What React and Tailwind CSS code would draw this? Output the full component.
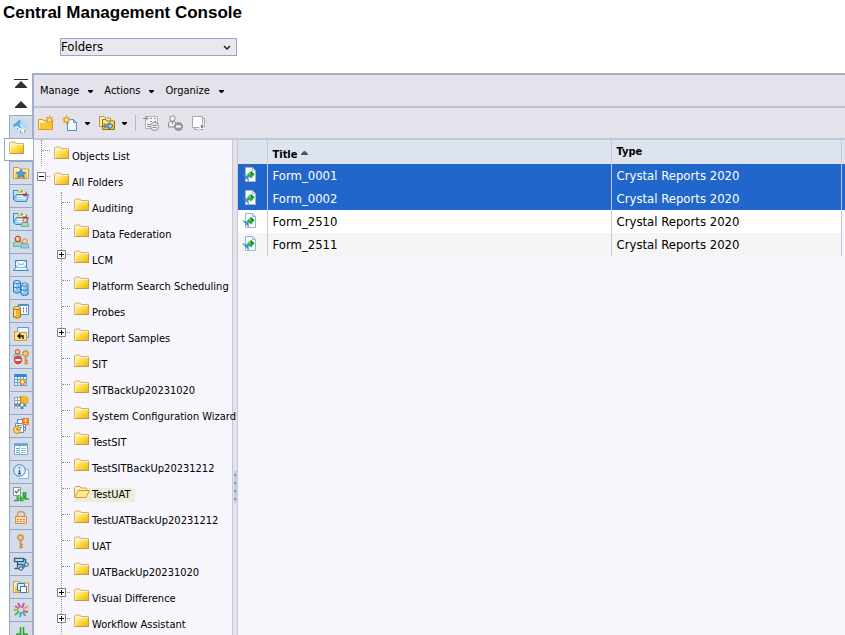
import React from "react";

const Folder = ({ open }) => (
  <svg width="16" height="14" viewBox="0 0 16 14" className="shrink-0" aria-hidden="true">
    <defs>
      <linearGradient id="fold" x1="0" y1="0" x2="1" y2="1">
        <stop offset="0" stopColor="#fff3b8" />
        <stop offset="0.5" stopColor="#fdd93c" />
        <stop offset="1" stopColor="#f0b40c" />
      </linearGradient>
    </defs>
    {open ? (
      <>
        <path d="M.5 12.500V3.500L1.500 2.500H6L7 4h5.500v2.500" fill="#fff3c4" stroke="#c9a25a" />
        <path d="M.8 13.500L4 6.500h11.500L12 13.500z" fill="#fdeb93" stroke="#d09a2a" />
      </>
    ) : (
      <>
        <path d="M.5 12.500V2L1.500 1H6L7 2.500h7.500v10z" fill="#fff0bd" stroke="#d5b070" />
        <path d="M2 4h12v8H2z" fill="url(#fold)" />
        <path d="M1 12.500h14M14.500 4v8" stroke="#c09a58" />
      </>
    )}
  </svg>
);

const Art = ({ children }) => (
  <svg width="16" height="16" viewBox="0 0 16 16" className="shrink-0" aria-hidden="true">
    {children}
  </svg>
);

const gold = "#d79a1e";
const blue = "#3b86c6";

const homeArt = (
  <>
    <path d="M1 6l6-5 5 2 3 6-3 4-4 2-6-4z" fill="#e8f4fd" stroke="#a9cdea" />
    <path d="M0 6l6-5 2 1-1 5 3 3-3-1-3-2-3 1z" fill="#5aa8e4" />
    <path d="M8 2l4 2 3 5-4 1-4-4z" fill="#b5daf6" />
    <path d="M11 11l2-1v3l-2 1z" fill="#e8a55c" />
    <path d="M7 11l1 3M4 9l1 2" stroke="#4b93cf" />
  </>
);
const foldArt = (
  <>
    <path d="M.5 13.500V2.500H6L7 4h8.500v9.500z" fill="#fff0bd" stroke="#d29a35" />
    <path d="M2 6h12v7H2z" fill="#f8c730" />
    <path d="M2 6h12v2H2z" fill="#fde58a" />
  </>
);
const starArt = (
  <>
    {foldArt}
    <path d="M8 4l1.500 3 3.500.4-2.500 2.300.7 3.300L8 11.400 4.800 13l.7-3.300L3 7.400 6.500 7z" fill="#4f9ae0" stroke="#2d75bd" strokeWidth=".6" />
  </>
);
const catsArt = (
  <>
    <path d="M.5 12V2.500H5L6 4h7.500v3" fill="#c5e3f8" stroke={blue} />
    <path d="M4 4l4-2 4 1 1 3H5z" fill="#fff" stroke="#d8cf8a" />
    <path d="M5 3h3v2H5z" fill="#f2cd28" />
    <path d="M8 2.500h2v2H8z" fill="#4fb053" />
    <path d="M3.500 6.500H15.500L13.500 13.500H2.500L.5 11z" fill="#9fd3f5" stroke={blue} />
    <path d="M4 8.500h7M4 10.500h9" stroke="#fff" />
    <path d="M10 5.500h4v2.500h-4z" fill="#e02828" />
  </>
);
const person = (x, y, shirt, hair) => (
  <g transform={`translate(${x} ${y})`}>
    <path d="M0 9V6.500Q0 5 2 5h3q2 0 2 1.500V9z" fill={shirt} stroke="#58a08a" strokeWidth=".7" />
    <circle cx="3.500" cy="2.800" r="2.200" fill="#f8cfa8" stroke={hair} strokeWidth=".9" />
  </g>
);
const pcatsArt = (
  <>
    {catsArt}
    {person(8.500, 6.500, "#9fdcb7", "#c6552c")}
  </>
);
const usersArt = (
  <>
    <g transform="translate(0 1) scale(1.200)">{person(0.500, 0.500, "#9fdcb7", "#c23b22")}</g>
    <g transform="translate(8 3) scale(1.100)">{person(0, 1, "#9cc9f5", "#d9823e")}</g>
  </>
);
const mailArt = (
  <>
    <path d="M2.500 3.500h11v7h-11z" fill="#fff" stroke={blue} />
    <path d="M3 4l5 4 5-4M3 10l3.500-3M13 10L9.500 7" fill="none" stroke="#7fb1da" />
    <path d="M2.500 10.500L.5 13.500h15l-2-3" fill="#e6f2fc" stroke={blue} />
  </>
);
const can = (x, y, h, fill, stroke) => (
  <g transform={`translate(${x} ${y})`}>
    <path d={`M.5 2v${h}q3.500 2.500 7 0V2z`} fill={fill} stroke={stroke} />
    <ellipse cx="4" cy="2" rx="3.500" ry="1.500" fill="#fff" fillOpacity=".7" stroke={stroke} />
    <path d="M2 4v6" stroke="#fff" />
  </g>
);
const serversArt = (
  <>
    {can(0, 0, 10, "#8cc8f5", "#2c78b8")}
    {can(7.500, 2.500, 10, "#8cc8f5", "#2c78b8")}
    <path d="M.5 7q3.500 2 7 0M8 9.500q3.500 2 7 0" fill="none" stroke="#2c78b8" />
  </>
);
const dataArt = (
  <>
    <path d="M5.500 1.500h10v10h-10z" fill="#fff" stroke="#4b8fd0" />
    <path d="M5 2.500h11" stroke="#4b8fd0" />
    <path d="M10 5.500h1m2 0h1M10 8.500h1m2 0h1" stroke="#3a72b8" strokeWidth="2" />
    {can(0, 3, 9, "#eeb422", "#ad7a10")}
  </>
);
const undoArt = (
  <>
    <path d="M4.500 1.500h11v10h-11z" fill="#eaf4fd" stroke="#5a9bd5" />
    <path d="M1.500 14.500v-9H5l1 1h7.500v8z" fill="#fbe08a" stroke={gold} />
    <path d="M5 10h5v3M7.500 7.500L5 10l2.500 2.500" fill="none" stroke="#111" strokeWidth="1.400" />
  </>
);
const keyShape = (
  <>
    <circle cx="3.500" cy="3.500" r="2.700" fill="#fbd58a" stroke="#cf8a35" strokeWidth="1.300" />
    <circle cx="3.500" cy="3" r=".8" fill="#fff" stroke="#cf8a35" strokeWidth=".5" />
    <path d="M3.500 6.500v8M4 10.500h2M4 13h2" stroke="#cf8a35" strokeWidth="1.700" />
  </>
);
const accessArt = (
  <>
    {person(1, 0, "#9fdcb7", "#c23b22")}
    <g transform="translate(9 1)">{keyShape}</g>
    <circle cx="5" cy="11" r="4.200" fill="#dc4040" />
    <path d="M2.500 11h5" stroke="#fff" strokeWidth="2" />
  </>
);
const calArt = (
  <>
    <path d="M1 2h13v12H1z" fill="#eaf5ff" />
    <path d="M1 3.500h13" stroke="#2f86d6" strokeWidth="3" />
    <path d="M1.500 2v12M4.500 5v9M7.500 5v9M10.500 5v9M13.500 2v12M1 7.500h13M1 10.500h13M1 13.500h13" stroke="#5ba4e0" />
    <circle cx="9.500" cy="10" r="2.300" fill="#fff" stroke="#f09020" strokeWidth="1.800" />
  </>
);
const gridArt = (
  <>
    <path d="M1 2h12v11H1z" fill="#f5f5f5" />
    <path d="M1.500 2v12M4.500 2v12M7.500 2v12M10.500 2v12M1 2.500h12M1 5.500h13M1 8.500h13M1 11.500h13" stroke="#9aa5b2" />
    <path d="M2 10h2M5 10h2M8 13h2M11 10h2" stroke="#3f90dc" strokeWidth="2" />
    <path d="M7.500 1v9" stroke="#b37a10" />
    <path d="M8 2l3-1 4 2v5l-4-1-3 1z" fill="#f6ba22" stroke="#d99a18" strokeWidth=".6" />
  </>
);
const alertArt = (
  <>
    <path d="M4.500 1.500h8v11h-8z" fill="#e8f3fd" stroke="#4b8fd0" />
    <path d="M2.500 5.500h8v9h-8z" fill="#fff" stroke="#4b8fd0" />
    <path d="M4 7.500h5M4 9.500h5M13 9.500h-2" stroke="#4b8fd0" />
    <circle cx="4" cy="12" r="3.300" fill="#fde28c" stroke={gold} strokeWidth="1.300" />
    <path d="M4 10v2h2" fill="none" stroke="#956510" />
    <path d="M9 0h7v7H9z" fill="#f5821f" />
    <path d="M12.500 1v3M12.500 5v1" stroke="#fff" strokeWidth="1.500" />
  </>
);
const listArt = (
  <>
    <path d="M1.500 2.500h13v11h-13z" fill="#fff" stroke="#78a8c9" />
    <path d="M2 4h12" stroke="#64a6d4" strokeWidth="2" />
    <path d="M3 7.500h3M3 9.500h3M3 11.500h3" stroke="#58a6d0" />
    <path d="M8 7.500h5M8 9.500h5M8 11.500h5" stroke="#9cc8c8" />
    <path d="M6.500 5v8" stroke="#a8c8de" />
  </>
);
const infoArt = (
  <>
    <path d="M7 5.500h8.500v9H6" fill="#f4f9fe" stroke="#86b4dc" />
    <circle cx="6.500" cy="6.500" r="5.800" fill="#dceefb" stroke="#3f86c8" />
    <path d="M6.500 3v1.500M6.500 6v4M5 9.700h3" stroke="#2668ad" strokeWidth="1.500" />
  </>
);
const gemFlow = (
  <path d="M7.500 2v9M10.500 2v9M7.500 9H4v4M10.500 9H14v4M1 13.500h6.500v-3M10.500 10.500v3H16" fill="none" stroke="#2da32d" strokeWidth="1.600" />
);
const auditArt = (
  <>
    <path d="M.5.5h7v8h-7z" fill="#fff" stroke="#8a949c" />
    <path d="M2 4l1.500 2L6.500 2" fill="none" stroke="#2fa13a" strokeWidth="1.300" />
    <path d="M4.500 9v3M7.500 9v3M10.500 5v5M12.500 5v5M1 13.500h4v-3M7.500 10.500v3h3M7 11.500h4v-3M12.500 9v3H16" fill="none" stroke="#2da32d" strokeWidth="1.700" />
  </>
);
const lockArt = (
  <>
    <path d="M4.500 7V4.500q0-3 3.500-3t3.500 3V7" fill="none" stroke="#cf9a6a" strokeWidth="1.500" />
    <path d="M2.500 6.500h11v7h-11z" fill="#fbdcae" stroke="#d38c4b" />
    <path d="M4 9.500h8M4 11.500h8" stroke="#d9873c" strokeDasharray="2 1" />
  </>
);
const keyArt = <g transform="translate(4 1)">{keyShape}</g>;
const toolsArt = (
  <>
    <path d="M1.500 2.500h9v3h-9zM4.500 8.500h6M4.500 5.500v6M1.500 12.500h5M10.500 3.500h2v4" fill="#fff" stroke="#27608f" strokeWidth="1.300" />
    <path d="M8 13l5-5" stroke="#3f86bd" strokeWidth="3" />
    <circle cx="8" cy="12.500" r="1.800" fill="#cfe5f6" stroke="#27608f" />
    <circle cx="13.500" cy="8.500" r="1.800" fill="#cfe5f6" stroke="#27608f" />
  </>
);
const promoArt = (
  <>
    {foldArt}
    <path d="M4.500 4.500h7v7h-7z" fill="#dceeff" stroke="#2f78d0" />
    <path d="M7.500 7.500h6v6h-6z" fill="#fff" stroke="#2f78d0" />
  </>
);
const burstArt = (
  <g strokeWidth="2">
    <path d="M7.500 5.500L5 1" stroke="#e0559a" />
    <path d="M9 6l2-5" stroke="#9a62c8" />
    <path d="M10 7l5-3" stroke="#f0a030" />
    <path d="M10 9l5 1" stroke="#e25b4b" />
    <path d="M9.500 10l3 4" stroke="#4f9ae0" />
    <path d="M8 10l-1 5" stroke="#35a6d8" />
    <path d="M6 9.500l-4 3.500" stroke="#53b257" />
    <path d="M5.500 8H1" stroke="#8bc34a" />
    <path d="M6 6.500L2 4" stroke="#d75a9c" />
  </g>
);

const sideItems = [
  ["Home", homeArt],
  ["Folders", null],
  ["Personal Folders", starArt],
  ["Categories", catsArt],
  ["Personal Categories", pcatsArt],
  ["Users and Groups", usersArt],
  ["Inboxes", mailArt],
  ["Servers", serversArt],
  ["Connections", dataArt],
  ["Replication Lists", undoArt],
  ["Access Levels", accessArt],
  ["Calendars", calArt],
  ["Events", gridArt],
  ["Instance Manager", alertArt],
  ["Query Results", listArt],
  ["Settings", infoArt],
  ["Auditing", auditArt],
  ["Authentication", lockArt],
  ["License Keys", keyArt],
  ["Applications", toolsArt],
  ["Promotion Management", promoArt],
  ["Visual Difference", burstArt],
  ["Monitoring", gemFlow],
];

const Sidebar = () => (
  <nav className="flex w-8 shrink-0 flex-col items-end">
    <div className="flex h-[42px] w-[22px] shrink-0 flex-col items-center gap-3 pt-[6px]">
      <button aria-label="Scroll to top">
        <svg width="14" height="10" viewBox="0 0 14 10" className="block"><path d="M0 0h14v1H0zM7 2l6 6v1H1V8z" fill="#303030" /></svg>
      </button>
      <button aria-label="Scroll up">
        <svg width="14" height="8" viewBox="0 0 14 8" className="block"><path d="M7 0l6 6v1H1V6z" fill="#303030" /></svg>
      </button>
    </div>
    {sideItems.map(([label, art]) =>
      label === "Folders" ? (
        <button key={label} aria-label={label} className="z-10 -mr-px flex h-[23px] w-[29px] shrink-0 items-center border border-r-0 border-[#93a7c8] bg-white pb-1 pl-1">
          <Folder />
        </button>
      ) : (
        <button key={label} aria-label={label} className="flex h-[23px] w-[23px] shrink-0 items-center justify-center border-t border-l border-[#93a7c8] bg-[#d5dce9]">
          <Art>{art}</Art>
        </button>
      )
    )}
  </nav>
);

const Caret = () => (
  <svg width="5" height="3" viewBox="0 0 5 3" className="shrink-0" aria-hidden="true"><path d="M0 0h5v1L3 3H2L0 1z" fill="#000" /></svg>
);

const sun = (x, y) => (
  <g transform={`translate(${x} ${y})`}>
    <path d="M0-4.500v9M-4.500 0h9M-3-3l6 6M3-3l-6 6" stroke="#e39a20" strokeWidth="1.200" />
    <circle r="2" fill="#fff2a8" stroke="#e39a20" />
  </g>
);

const Toolbar = () => (
  <div className="flex h-8 shrink-0 items-center border-b-2 border-[#c4c5d8] pl-1">
    <button aria-label="New folder">
      <svg width="16" height="16" viewBox="0 0 16 16" className="block">
        <path d="M.5 14.500V4.500H5L6 6h8.500v8.500z" fill="#fff0bd" stroke={gold} />
        <path d="M2 8h12v6H2z" fill="#f9c82e" />
        {sun(11.500, 5)}
      </svg>
    </button>
    <button aria-label="New object" className="ml-2 flex items-center gap-[7px]">
      <svg width="16" height="16" viewBox="0 0 16 16">
        <path d="M5.500 4.500h6l3 3v8h-9z" fill="#f2f9ff" stroke="#4e92d6" />
        <path d="M11.500 4.500v3h3" fill="none" stroke="#4e92d6" />
        {sun(4.500, 4.800)}
      </svg>
      <Caret />
    </button>
    <button aria-label="Move" className="ml-[9px] flex items-center gap-[7px]">
      <svg width="16" height="16" viewBox="0 0 16 16">
        <path d="M.5 11.500V1.500H5l1 1.500h5.500v8.500z" fill="#fdeeb5" stroke="#b9943e" />
        <path d="M3.500 14.500V4.500H7L8 6h7.500v8.500z" fill="#fbe390" stroke="#8f7020" />
        <path d="M4 8h11v6H4z" fill="#f6c420" />
        <path d="M5 10h5V7.500l4 3.500-4 3.500V12H5z" fill="#a9d0f5" stroke="#2458a4" strokeWidth=".9" />
      </svg>
      <Caret />
    </button>
    <div className="ml-2 h-4 w-px bg-[#b3b6cc]" />
    <button aria-label="Properties" disabled className="ml-[7px]">
      <svg width="16" height="16" viewBox="0 0 16 16" className="block" stroke="#8c8c8c" fill="none">
        <path d="M2.500 1.500h12v12h-12z" fill="#f5f5f5" stroke="#b0b0b0" />
        <path d="M0 3.500h5M3 1.500l2 2-2 2M7 3.500h2m2 0h2M7 6.500h2m2 0h2M4 9.500h3M4 11.500h3" />
        <circle cx="11.500" cy="11.500" r="4" fill="#eee" /><path d="M9.500 10.500h4M9.500 12.500h4" />
      </svg>
    </button>
    <button aria-label="User security" disabled className="ml-2">
      <svg width="16" height="16" viewBox="0 0 16 16" className="block" stroke="#8c8c8c" fill="none">
        <path d="M1.500 12V9q0-2.500 2-2.500h4l2 2V12z" fill="#ececec" />
        <circle cx="5.500" cy="3.500" r="2.700" fill="#f4f4f4" />
        <path d="M5.500 7v2" /><circle cx="11.500" cy="11.500" r="4" fill="#999" /><path d="M9 11.500h5" stroke="#fff" strokeWidth="2" />
      </svg>
    </button>
    <button aria-label="Delete" disabled className="ml-2">
      <svg width="16" height="16" viewBox="0 0 16 16" className="block" stroke="#a8a8a8" fill="none">
        <path d="M3.500 3.500h10v11h-10z" fill="#f4f4f4" /><path d="M1.500 1.500h10v11h-10z" fill="#fff" />
        <path d="M11 8.500L7.500 15h7z" fill="#fff" stroke="#ddd" /><path d="M11 10v3M11 14v1" stroke="#111" />
      </svg>
    </button>
  </div>
);

const folders = [
  ["Auditing"], ["Data Federation"], ["LCM", true], ["Platform Search Scheduling"], ["Probes"],
  ["Report Samples", true], ["SIT"], ["SITBackUp20231020"], ["System Configuration Wizard"], ["TestSIT"],
  ["TestSITBackUp20231212"], ["TestUAT"], ["TestUATBackUp20231212"], ["UAT"], ["UATBackUp20231020"],
  ["Visual Difference", true], ["Workflow Assistant", true],
];

const Toggle = ({ open, label }) => (
  <button aria-label={label} className="absolute top-[6px] -left-[5px] bg-[#f6f6fc]">
    <svg width="9" height="9" viewBox="0 0 9 9" className="block">
      <path d="M.5.5h8v8h-8z" fill="#fff" stroke="#808080" />
      <path d={open ? "M2 4.500h5" : "M2 4.500h5M4.500 2v5"} stroke="#000" />
    </svg>
  </button>
);

const Node = ({ name, toggle, open, selected }) => (
  <div className="relative flex h-[26px]">
    <div className="h-[11px] w-2 shrink-0 border-b border-dotted border-[#909090]" />
    {toggle && <Toggle open={open} label={"Toggle " + name} />}
    <a href="#" className={"mt-[10px] ml-1 flex h-[14px] items-start gap-[2px] leading-[14px] whitespace-nowrap " + (selected ? "bg-[#ededdb] pr-1" : "")}>
      <span className="-mt-1"><Folder open={selected} /></span>
      <span>{name}</span>
    </a>
  </div>
);

const Tree = () => (
  <div className="relative z-10 w-[198px] shrink-0 bg-[#f6f6fc] pl-[7px]">
    <div className="h-[26px] border-l border-dotted border-[#909090]"><Node name="Objects List" /></div>
    <div className="h-[26px] pl-px"><Node name="All Folders" toggle open /></div>
    <div className="ml-5 border-l border-dotted border-[#909090]">
      {folders.map(([name, toggle]) => (
        <Node key={name} name={name} toggle={toggle} selected={name === "TestUAT"} />
      ))}
    </div>
  </div>
);

const ReportIcon = () => (
  <svg width="16" height="16" viewBox="0 0 16 16" className="block" aria-hidden="true">
    <path d="M3.500.5h7l3 3v11h-10z" fill="#f7fbff" stroke="#9cb4cc" />
    <path d="M10.500.5v3h3" fill="none" stroke="#9cb4cc" />
    <path d="M9 4l3.500 3.500L9 11.500 5 7.500z" fill="#27b32b" />
    <path d="M9 4l3.500 3.500H9z" fill="#0c8a1c" />
    <path d="M8.500 5L6.500 7.500h2z" fill="#7fe07a" />
    <path d="M0 7l4 1.500L8 8l-1.500 2.500.5 4-3-3z" fill="#4a8bd6" />
  </svg>
);

const rows = [["Form_0001", true], ["Form_0002", true], ["Form_2510", false], ["Form_2511", false]];

const Reports = () => (
  <table className="w-full table-fixed border-collapse text-left text-[13px]">
    <colgroup>
      <col className="w-[29px]" /><col /><col className="w-[230px]" /><col className="w-1" />
    </colgroup>
    <thead>
      <tr className="h-6 bg-[#dde4ee] text-[11px]">
        <td className="border-r border-[#c6c8da]"></td>
        <th className="border-r border-[#c6c8da] p-0 pt-[6px] pl-[5px]">
          <span className="flex items-center gap-1">Title
            <svg width="7" height="4" viewBox="0 0 7 4" className="mb-1"><path d="M3 0h1l3 3v1H0V3z" fill="#50506e" /></svg>
          </span>
        </th>
        <th className="border-r border-[#c6c8da] p-0 pt-px pl-[5px]">Type</th>
        <td></td>
      </tr>
    </thead>
    <tbody>
      {rows.map(([name, sel], i) => (
        <tr key={name} className={"h-[23px] " + (sel ? "bg-[#2166cb] text-white" : i % 2 ? "bg-[#f5f5f5]" : "bg-white")}>
          <td className="border-r border-[#c6c8da] p-0 pb-[2px] pl-1"><ReportIcon /></td>
          <td className="border-r border-[#c6c8da] p-0 pl-[5px] leading-4">{name}</td>
          <td className="border-r border-[#c6c8da] p-0 pl-[5px] leading-4">{"Crystal Reports 2020"}</td>
          <td className={sel ? "p-0" : "bg-[#f6f6fc] p-0"}></td>
        </tr>
      ))}
    </tbody>
  </table>
);

export default function App() {
  return (
    <div className="flex h-screen flex-col overflow-hidden bg-white font-['DejaVu_Sans_Condensed','DejaVu_Sans',sans-serif] text-[11px] text-black">
      <h1 className="h-[38px] shrink-0 pt-[3px] pl-[3px] font-['Liberation_Sans',Arial,sans-serif] text-[17px] leading-5 font-bold">Central Management Console</h1>
      <div className="relative ml-[60px] h-[35px] w-[177px] shrink-0">
        <select aria-label="Area" defaultValue="Folders" className="block h-[18px] w-full appearance-none border border-[#93a7c8] bg-[#e9e8ee] text-[13px] leading-4">
          <option>Folders</option>
        </select>
        <svg width="8" height="6" viewBox="0 0 8 6" className="pointer-events-none absolute top-[7px] right-[6px]"><path d="M1 1l3 3 3-3" fill="none" stroke="#222" strokeWidth="1.500" /></svg>
      </div>
      <div className="flex min-h-0 flex-1">
        <Sidebar />
        <main className="flex min-w-0 flex-1 flex-col border-t-2 border-l-2 border-[#a2aecb] bg-[#e4e3eb]">
          <div className="flex h-[33px] shrink-0 items-center gap-[11px] border-b-2 border-[#bfc0d4] pt-[2px] pl-[6px]">
            {["Manage", "Actions", "Organize"].map((m) => (
              <button key={m} className="flex items-center gap-[9px]">{m}<Caret /></button>
            ))}
          </div>
          <Toolbar />
          <div className="flex min-h-0 flex-1">
            <Tree />
            <div className="flex w-[6px] shrink-0 flex-col items-center justify-center border-x border-[#c6c8da] pt-[226px] pb-7">
              <div className="flex h-8 w-[3px] shrink-0 flex-col items-start justify-around bg-[#c3d2e8]">
                <i className="size-[2px] bg-[#7f90ae]" /><i className="size-[2px] bg-[#7f90ae]" /><i className="size-[2px] bg-[#7f90ae]" /><i className="size-[2px] bg-[#7f90ae]" />
              </div>
            </div>
            <div className="min-w-0 flex-1 bg-[#f6f6fc]"><Reports /></div>
          </div>
        </main>
      </div>
    </div>
  );
}
